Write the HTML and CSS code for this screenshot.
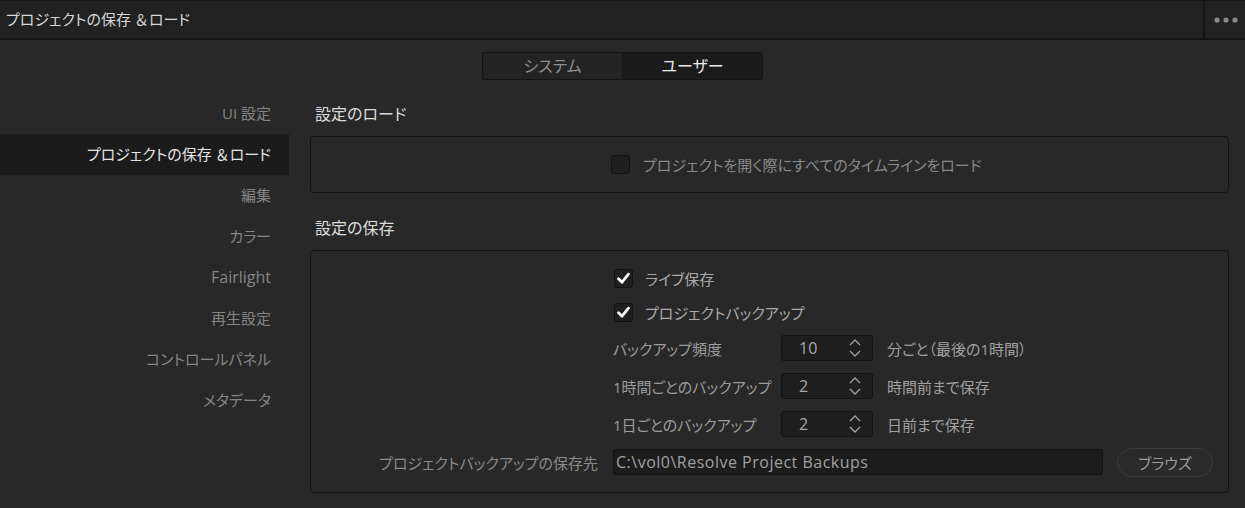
FILE: index.html
```html
<!DOCTYPE html>
<html lang="ja">
<head>
  <meta charset="UTF-8">
  <title>プロジェクトの保存＆ロード</title>
  <link rel="stylesheet" href="styles.css">
</head>
<body>
  <header class="titlebar">
    <div class="title">プロジェクトの保存<span class="amp">＆</span>ロード</div>
    <div class="more">
      <svg width="26" height="8" viewBox="0 0 26 8"><circle cx="4" cy="4" r="2.6"/><circle cx="13" cy="4" r="2.6"/><circle cx="22" cy="4" r="2.6"/></svg>
    </div>
  </header>

  <div class="tabs">
    <div class="tab">システム</div>
    <div class="tab active">ユーザー</div>
  </div>

  <div class="main">
    <nav class="sidebar">
      <div class="nav-item">UI 設定</div>
      <div class="nav-item selected">プロジェクトの保存<span class="amp">＆</span>ロード</div>
      <div class="nav-item">編集</div>
      <div class="nav-item">カラー</div>
      <div class="nav-item latin">Fairlight</div>
      <div class="nav-item">再生設定</div>
      <div class="nav-item">コントロールパネル</div>
      <div class="nav-item">メタデータ</div>
    </nav>

    <div class="content">
      <h2 class="section-title">設定のロード</h2>
      <div class="panel panel-load">
        <label class="check-row dim"><span class="checkbox"></span>プロジェクトを開く際にすべてのタイムラインをロード</label>
      </div>

      <h2 class="section-title second">設定の保存</h2>
      <div class="panel panel-save">
        <label class="check-row save-row"><span class="checkbox checked"><svg width="19" height="19" viewBox="0 0 19 19"><path d="M4.5 9.8 L8 13.2 L14.5 5.2"/></svg></span>ライブ保存</label>
        <label class="check-row save-row"><span class="checkbox checked"><svg width="19" height="19" viewBox="0 0 19 19"><path d="M4.5 9.8 L8 13.2 L14.5 5.2"/></svg></span>プロジェクトバックアップ</label>

        <div class="form-row">
          <span class="form-label">バックアップ頻度</span>
          <div class="spin"><span class="spin-value">10</span><svg class="spin-arrows" width="14" height="20" viewBox="0 0 14 20"><path d="M2 7 L7 2 L12 7 M2 13 L7 18 L12 13"/></svg></div>
          <span class="suffix">分ごと（最後の1時間）</span>
        </div>
        <div class="form-row">
          <span class="form-label">1時間ごとのバックアップ</span>
          <div class="spin"><span class="spin-value">2</span><svg class="spin-arrows" width="14" height="20" viewBox="0 0 14 20"><path d="M2 7 L7 2 L12 7 M2 13 L7 18 L12 13"/></svg></div>
          <span class="suffix">時間前まで保存</span>
        </div>
        <div class="form-row">
          <span class="form-label">1日ごとのバックアップ</span>
          <div class="spin"><span class="spin-value">2</span><svg class="spin-arrows" width="14" height="20" viewBox="0 0 14 20"><path d="M2 7 L7 2 L12 7 M2 13 L7 18 L12 13"/></svg></div>
          <span class="suffix">日前まで保存</span>
        </div>

        <div class="path-row">
          <span class="path-label">プロジェクトバックアップの保存先</span>
          <div class="path-input">C:\vol0\Resolve Project Backups</div>
          <button class="browse">ブラウズ</button>
        </div>
      </div>
    </div>
  </div>
</body>
</html>
```

FILE: styles.css
```css
* {
  margin: 0;
  padding: 0;
  box-sizing: border-box;
}

body {
  width: 1245px;
  height: 508px;
  overflow: hidden;
  background-color: #282828;
  color: #9a9a9a;
  font-family: "Open Sans", "Noto Sans CJK JP", sans-serif;
  font-feature-settings: "palt";
  font-size: 15px;
}

/* 全角の＆は詰めない */
.amp {
  font-feature-settings: normal;
  padding-left: 3px;
}

/* タイトルバー */
.titlebar {
  display: flex;
  height: 40px;
  background-color: #212121;
  border-top: 1px solid #161616;
  border-bottom: 2px solid #141414;
}

.title {
  flex: 1;
  padding-left: 6px;
  line-height: 36px;
  font-size: 15px;
  color: #d6d6d6;
}

.more {
  width: 42px;
  border-left: 2px solid #141414;
  display: flex;
  align-items: center;
  justify-content: center;
  padding-left: 2px;
}

.more svg {
  fill: #8a8a8a;
}

/* タブ */
.tabs {
  display: flex;
  justify-content: center;
  margin-top: 12px;
}

.tab {
  width: 140px;
  height: 28px;
  line-height: 26px;
  text-align: center;
  background-color: #242424;
  border: 1px solid #141414;
  color: #8e8e8e;
  font-size: 16px;
}

.tab:first-child {
  border-radius: 3px 0 0 3px;
  border-right: none;
}

.tab.active {
  width: 141px;
  background-color: #1b1b1b;
  color: #ececec;
  border-radius: 0 3px 3px 0;
}

/* メイン */
.main {
  display: flex;
  margin-top: 13px;
}

.sidebar {
  width: 289px;
}

.nav-item {
  height: 41px;
  line-height: 41px;
  padding-right: 18px;
  text-align: right;
  font-size: 15px;
  color: #858585;
}

.nav-item.latin {
  font-size: 16px;
}

.nav-item.selected {
  background-color: #1b1b1b;
  color: #e4e4e4;
}

.content {
  flex: 1;
  margin-left: 21px;
  margin-right: 16px;
}

.section-title {
  height: 43px;
  line-height: 43px;
  padding-left: 5px;
  font-size: 16px;
  font-weight: normal;
  color: #dcdcdc;
}

.section-title.second {
  margin-top: 14px;
}

.panel {
  border: 1px solid #121212;
  border-radius: 4px;
}

.panel-load {
  height: 57px;
  display: flex;
  align-items: center;
  padding-left: 300px;
}

.check-row {
  display: flex;
  align-items: center;
  gap: 13px;
  color: #aaaaaa;
}

.check-row.dim {
  color: #888888;
}

.checkbox {
  width: 19px;
  height: 19px;
  background-color: #1f1f1f;
  border: 1px solid #121212;
  border-radius: 3px;
  display: flex;
}

.checkbox svg {
  margin: -1px;
}

.checkbox path {
  fill: none;
  stroke: #ffffff;
  stroke-width: 2.8;
  stroke-linecap: round;
  stroke-linejoin: round;
}

.panel-save {
  padding: 10px 0 11px;
}

.save-row {
  height: 34px;
  padding-left: 303px;
  gap: 12px;
}

.form-row {
  display: flex;
  align-items: center;
  height: 38px;
  padding-left: 302px;
}

.form-label {
  width: 168px;
  color: #9c9c9c;
}

.spin {
  width: 92px;
  height: 26px;
  display: flex;
  align-items: center;
  justify-content: space-between;
  padding: 0 10px 0 17px;
  background-color: #1e1e1e;
  border: 1px solid #121212;
  border-radius: 3px;
  color: #a8a8a8;
  font-size: 16px;
}

.spin-arrows path {
  fill: none;
  stroke: #a0a0a0;
  stroke-width: 1.4;
}

.suffix {
  margin-left: 14px;
  color: #a0a0a0;
}

.path-row {
  display: flex;
  align-items: center;
  height: 38px;
}

.path-label {
  width: 287px;
  text-align: right;
  color: #8a8a8a;
}

.path-input {
  width: 490px;
  height: 26px;
  margin-left: 15px;
  padding-left: 2px;
  line-height: 24px;
  background-color: #1c1c1c;
  border: 1px solid #121212;
  border-radius: 2px;
  color: #a0a0a0;
  font-size: 16px;
  letter-spacing: 0.5px;
}

.browse {
  width: 96px;
  height: 29px;
  margin-left: 14px;
  background-color: #2a2a2a;
  border: 1px solid #3a3a3a;
  border-radius: 15px;
  color: #9c9c9c;
  font-family: inherit;
  font-size: 15px;
  font-feature-settings: "palt";
}
```
